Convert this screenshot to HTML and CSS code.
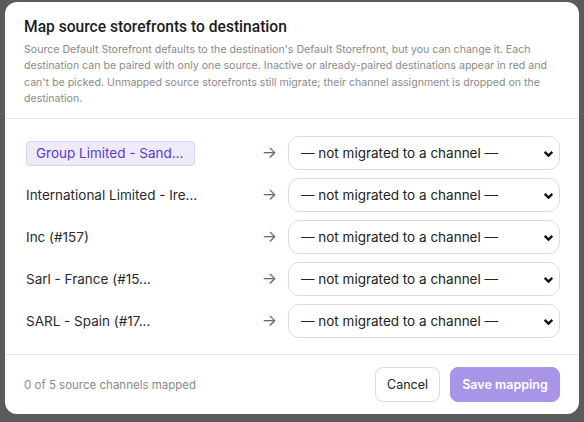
FILE: index.html
```html
<!DOCTYPE html>
<html lang="en">
<head>
    <meta charset="UTF-8">
    <meta name="viewport" content="width=device-width, initial-scale=1.0">
    <title>Map storefronts</title>
    <link rel="stylesheet" href="styles.css">
</head>
<body>
    <div class="modal">
        <div class="modal-head">
            <h2>Map source storefronts to destination</h2>
            <p>Source Default Storefront defaults to the destination's Default Storefront, but you can change it. Each destination can be paired with only one source. Inactive or already-paired destinations appear in red and can't be picked. Unmapped source storefronts still migrate; their channel assignment is dropped on the destination.</p>
        </div>

        <div class="modal-body">
            <div class="row">
                <span class="source chip">Group Limited - Sand...</span>
                <span class="arrow">&rarr;</span>
                <div class="select">— not migrated to a channel —<svg viewBox="0 0 12 12"><path d="M2.5 4.5 6 8l3.5-3.5"/></svg></div>
            </div>
            <div class="row">
                <span class="source">International Limited - Ire...</span>
                <span class="arrow">&rarr;</span>
                <div class="select">— not migrated to a channel —<svg viewBox="0 0 12 12"><path d="M2.5 4.5 6 8l3.5-3.5"/></svg></div>
            </div>
            <div class="row">
                <span class="source">Inc (#157)</span>
                <span class="arrow">&rarr;</span>
                <div class="select">— not migrated to a channel —<svg viewBox="0 0 12 12"><path d="M2.5 4.5 6 8l3.5-3.5"/></svg></div>
            </div>
            <div class="row">
                <span class="source">Sarl - France (#15...</span>
                <span class="arrow">&rarr;</span>
                <div class="select">— not migrated to a channel —<svg viewBox="0 0 12 12"><path d="M2.5 4.5 6 8l3.5-3.5"/></svg></div>
            </div>
            <div class="row">
                <span class="source">SARL - Spain (#17...</span>
                <span class="arrow">&rarr;</span>
                <div class="select">— not migrated to a channel —<svg viewBox="0 0 12 12"><path d="M2.5 4.5 6 8l3.5-3.5"/></svg></div>
            </div>
        </div>

        <div class="modal-foot">
            <span class="count">0 of 5 source channels mapped</span>
            <button class="btn">Cancel</button>
            <button class="btn primary">Save mapping</button>
        </div>
    </div>
</body>
</html>
```

FILE: styles.css
```css
*{
    margin: 0;
    padding: 0;
    box-sizing: border-box;
}
body{
    background: #5b5b5d;
    font-family: Inter, "Noto Sans", sans-serif;
    padding: 2px 5px 0 5px;
    height: 422px;
    overflow: hidden;
}
.modal{
    background: #fff;
    border-radius: 12px;
    height: 412px;
    display: flex;
    flex-direction: column;
}
.modal-head{
    padding: 14px 19px 11px 19px;
    border-bottom: 1px solid #e6e6e6;
}
h2{
    font-family: Roboto, sans-serif;
    font-size: 15.6px;
    font-weight: 500;
    color: #1c1c1e;
    line-height: 22px;
    margin-bottom: 4px;
}
.modal-head p{
    font-size: 10.6px;
    line-height: 16.3px;
    color: #8a8a8a;
}
.modal-body{
    padding: 17px 19px 16px 21px;
    display: flex;
    flex-direction: column;
    gap: 8px;
    border-bottom: 1px solid #e6e6e6;
}
.row{
    display: flex;
    align-items: center;
    height: 34px;
}
.source{
    flex: 1;
    font-size: 13.5px;
    color: #2a2a2a;
}
.chip{
    flex: none;
    width: 169px;
    margin-right: auto;
    background: #efebfd;
    border: 1px solid #d9d1f6;
    border-radius: 4px;
    color: #5a3cc6;
    padding: 4px 9px;
    line-height: 15px;
}
.arrow{
    color: #6a6a6a;
    font-size: 16px;
    line-height: 16px;
    margin: -2px 11px 0 0;
}
.select{
    width: 272px;
    height: 34px;
    border: 1px solid #dcdcdc;
    border-radius: 11px;
    display: flex;
    align-items: center;
    justify-content: space-between;
    padding: 0 4px 0 12px;
    font-size: 13.5px;
    color: #222;
}
.select svg{
    width: 13px;
    height: 13px;
    fill: none;
    stroke: #111;
    stroke-width: 2.2;
}
.modal-foot{
    flex: 1;
    display: flex;
    align-items: center;
    gap: 10px;
    padding: 0 19px;
}
.count{
    flex: 1;
    font-size: 11.5px;
    color: #8a8a8a;
}
.btn{
    font-family: inherit;
    height: 35px;
    border-radius: 8px;
    border: 1px solid #dcdcdc;
    background: #fff;
    font-size: 12.5px;
    color: #222;
    padding: 0 11px;
    white-space: nowrap;
}
.primary{
    background: #a895e8;
    border-color: #a895e8;
    color: #fff;
    font-weight: 600;
    width: 110px;
    padding: 0;
}
```
